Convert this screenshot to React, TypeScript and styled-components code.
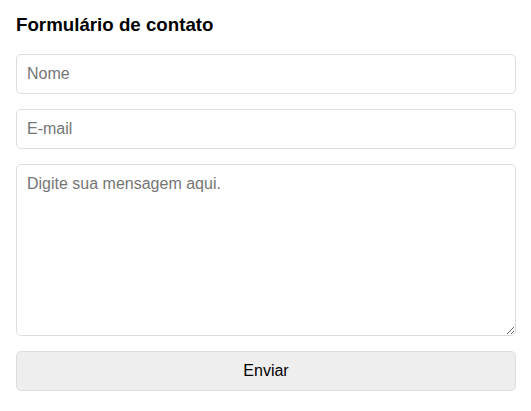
import React from "react";
import styled, { createGlobalStyle } from "styled-components";

const GlobalStyle = createGlobalStyle`
  html, body { margin: 0; padding: 0; background: #ffffff; }
  body { font-family: "Liberation Sans", Arial, sans-serif; color: #000; }
  * { box-sizing: border-box; }
`;

const Form = styled.form`
  display: flex;
  flex-direction: column;
  gap: 15px;
  width: 500px;
  margin: 14px 16px;
`;

const Title = styled.h3`
  margin: 0 0 3px;
  font-size: 18.72px;
  line-height: 22px;
  font-weight: bold;
  color: #000;
`;

const fieldBase = `
  width: 100%;
  border: 1px solid #dddddd;
  border-radius: 5px;
  padding: 10px;
  font-family: "Liberation Sans", Arial, sans-serif;
  font-size: 16px;
  line-height: 18px;
  color: #000;
  background: #fff;
  outline: none;
  &::placeholder { color: #757575; }
`;

const Input = styled.input`
  ${fieldBase}
  height: 40px;
`;

const TextArea = styled.textarea`
  ${fieldBase}
  height: 172px;
  resize: vertical;
  display: block;
`;

const Button = styled.button`
  height: 40px;
  width: 100%;
  border: 1px solid #dddddd;
  border-radius: 5px;
  background: #eeeeee;
  font-family: "Liberation Sans", Arial, sans-serif;
  font-size: 16px;
  color: #000;
  cursor: pointer;
`;

export default function App() {
  return (
    <>
      <GlobalStyle />
      <Form onSubmit={(e) => e.preventDefault()}>
        <Title>Formulário de contato</Title>
        <Input type="text" placeholder="Nome" />
        <Input type="email" placeholder="E-mail" />
        <TextArea placeholder="Digite sua mensagem aqui." />
        <Button type="submit">Enviar</Button>
      </Form>
    </>
  );
}
